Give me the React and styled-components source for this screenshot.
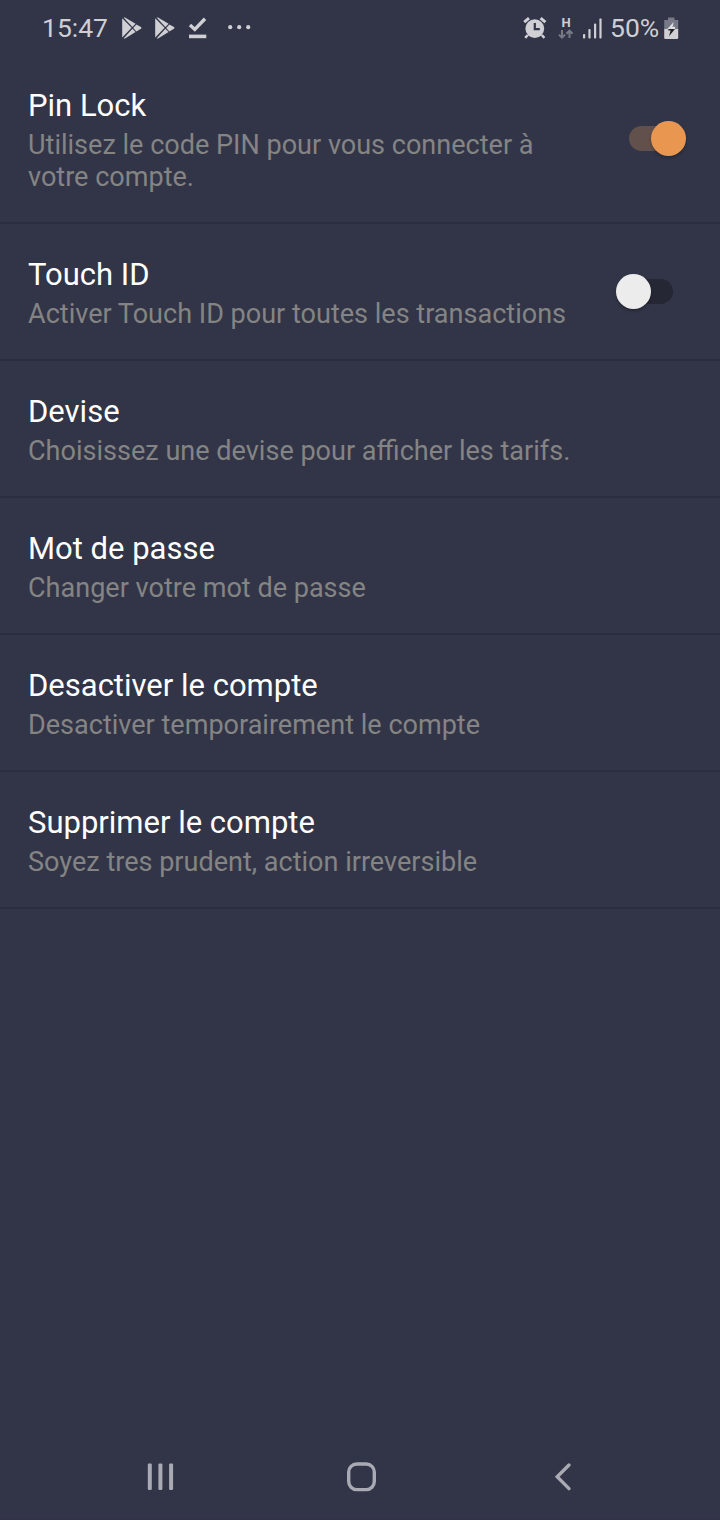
import React from 'react';
import styled, { createGlobalStyle } from 'styled-components';

const GlobalStyle = createGlobalStyle`
  * { box-sizing: border-box; }
  body { margin: 0; background: #323547; font-family: Roboto, "Liberation Sans", sans-serif; }
`;

const Screen = styled.div`
  width: 720px;
  height: 1520px;
  display: flex;
  flex-direction: column;
  background: #323547;
  overflow: hidden;
`;

const StatusBar = styled.header`
  height: 56px;
  flex: none;
  display: flex;
  justify-content: space-between;
  padding: 0 41px 0 42px;
  color: #cfcfd4;
`;

const StatusGroup = styled.div`
  display: flex;
  align-items: center;
`;

const StatusText = styled.span`
  width: ${(p) => p.$width}px;
  margin-left: ${(p) => p.$gap || 0}px;
  font-size: 26.5px;
  line-height: 32px;
  white-space: nowrap;
`;

const StatusIcon = styled.svg`
  display: block;
  flex: none;
  margin-left: ${(p) => p.$gap}px;
`;

const DataStatus = styled.div`
  width: 16px;
  margin-left: 11px;
  display: flex;
  flex-direction: column;
  align-items: center;
`;

const DataLabel = styled.span`
  font-size: 13px;
  line-height: 13px;
  font-weight: 700;
`;

const Settings = styled.main`
  flex: 1;
`;

const Row = styled.section`
  height: ${(p) => p.$height || 137}px;
  padding: 32px 28px 0;
  display: flex;
  justify-content: space-between;
  border-bottom: 2px solid #2b2d3f;

  &:first-child { padding-top: 31px; }
`;

const RowText = styled.div`
  width: 550px;
`;

const Title = styled.h2`
  margin: 0 0 5px;
  font-size: 31px;
  line-height: 37px;
  font-weight: 400;
  color: #fff;
`;

const Description = styled.p`
  margin: 0;
  font-size: 27.05px;
  line-height: 32px;
  color: #848484;
`;

const Track = styled.div`
  flex: none;
  width: 44px;
  height: 25px;
  margin: ${(p) => (p.$on ? '39px 19px 0 0' : '23px 19px 0 0')};
  border-radius: 13px;
  display: flex;
  align-items: center;
  background: ${(p) => (p.$on ? '#62504c' : '#252735')};
`;

const Thumb = styled.div`
  flex: none;
  width: 35px;
  height: 35px;
  margin-left: ${(p) => (p.$on ? 22 : -13)}px;
  border-radius: 50%;
  background: ${(p) => (p.$on ? '#e99651' : '#ececec')};
  box-shadow: 0 2px 3px rgba(0, 0, 0, 0.25);
`;

const NavBar = styled.nav`
  height: 84px;
  flex: none;
  display: flex;
  align-items: center;
  padding: 0 141px 1px 145px;
  border-bottom: 1px solid #362f47;
  justify-content: space-between;
`;

const NavIcon = styled.svg`
  display: block;
`;

const PlayIcon = ({ gap }) => (
  <StatusIcon $gap={gap} width="20" height="22" viewBox="0 0 20 22" fill="currentColor">
    <path d="M.2 1.2 9.6 10.8.2 20.6Z" />
    <path d="M1.6.4 3 .4 13.6 6.7 10.4 10Z" />
    <path d="M10.4 11.8 13.6 15 3 21.4 1.6 21.4Z" />
    <path d="M11.2 10.9 14.4 7.4 19 10q1 .9 0 1.8L14.4 14.4Z" />
  </StatusIcon>
);

const DownloadDoneIcon = () => (
  <StatusIcon $gap={13} width="19" height="22" viewBox="0 0 19 22">
    <path d="M2 8 6.8 12.4 17 1.8" fill="none" stroke="currentColor" strokeWidth="3.4" />
    <path d="M1 17.6h17.3v3.6H1z" fill="currentColor" />
  </StatusIcon>
);

const MoreIcon = () => (
  <StatusIcon $gap={21} width="23" height="6" viewBox="0 0 23 6" fill="currentColor">
    <circle cx="2.2" cy="2.2" r="2.1" />
    <circle cx="11.2" cy="2.2" r="2.1" />
    <circle cx="20.2" cy="2.2" r="2.1" />
  </StatusIcon>
);

const AlarmIcon = () => (
  <StatusIcon $gap={0} width="24" height="23" viewBox="0 0 24 23">
    <circle cx="11.8" cy="11.6" r="9.4" fill="currentColor" />
    <path d="M1.2 5.2 6 1.2M17.6 1.2 22.4 5.2" stroke="currentColor" strokeWidth="3" />
    <path d="M4.8 18 2.2 20.8M18.8 18 21.4 20.8" stroke="currentColor" strokeWidth="2.5" />
    <path d="M11.8 6v6.2h5" fill="none" stroke="#323547" strokeWidth="2.2" />
  </StatusIcon>
);

const DataIcon = () => (
  <DataStatus>
    <DataLabel>H</DataLabel>
    <svg width="16" height="11" viewBox="0 0 16 11" fill="none" stroke="#777987" strokeWidth="2">
      <path d="M4 1v7.5M.9 5.6 4 8.7 7.1 5.6M11.5 9V1.6M8.4 4.7 11.5 1.6 14.6 4.7" />
    </svg>
  </DataStatus>
);

const SignalIcon = () => (
  <StatusIcon $gap={9} width="19" height="21" viewBox="0 0 19 21" fill="currentColor">
    <rect x="0" y="16" width="2.2" height="4.5" rx=".8" />
    <rect x="5.4" y="11" width="2.2" height="9.5" rx=".8" />
    <rect x="11" y="5.5" width="2.2" height="15" rx=".8" />
    <rect x="16.4" y="0.5" width="2.2" height="20" rx=".8" />
  </StatusIcon>
);

const BatteryIcon = () => (
  <StatusIcon $gap={5} width="15" height="23" viewBox="0 0 15 23">
    <path d="M4 .5h6.5V3H4zM0.2 3h14v9H.2z" fill="#777987" />
    <path d="M.2 12h14v8.7q0 1.3-1.3 1.3H1.5Q.2 22 .2 20.7Z" fill="#cfcfd4" />
    <path d="M9.6 5 3.4 12H6.6L9 8.8Z" fill="#dedee3" />
    <path d="M7.3 9.8H11V12H6.5Z" fill="#dedee3" />
    <path d="M4.4 12H11L5 19.2 6.6 13.4H4.4Z" fill="#202126" />
  </StatusIcon>
);

const Switch = ({ on }) => (
  <Track $on={on} role="switch" aria-checked={on}>
    <Thumb $on={on} />
  </Track>
);

const items = [
  { title: 'Pin Lock', text: 'Utilisez le code PIN pour vous connecter à votre compte.', on: true, height: 168 },
  { title: 'Touch ID', text: 'Activer Touch ID pour toutes les transactions', on: false },
  { title: 'Devise', text: 'Choisissez une devise pour afficher les tarifs.' },
  { title: 'Mot de passe', text: 'Changer votre mot de passe' },
  { title: 'Desactiver le compte', text: 'Desactiver temporairement le compte' },
  { title: 'Supprimer le compte', text: 'Soyez tres prudent, action irreversible' },
];

export default function App() {
  return (
    <Screen>
      <GlobalStyle />
      <StatusBar>
        <StatusGroup>
          <StatusText $width={66}>15:47</StatusText>
          <PlayIcon gap={14} />
          <PlayIcon gap={13} />
          <DownloadDoneIcon />
          <MoreIcon />
        </StatusGroup>
        <StatusGroup>
          <AlarmIcon />
          <DataIcon />
          <SignalIcon />
          <StatusText $width={49} $gap={8}>50%</StatusText>
          <BatteryIcon />
        </StatusGroup>
      </StatusBar>
      <Settings>
        {items.map((item) => (
          <Row key={item.title} $height={item.height}>
            <RowText>
              <Title>{item.title}</Title>
              <Description>{item.text}</Description>
            </RowText>
            {item.on !== undefined && <Switch on={item.on} />}
          </Row>
        ))}
      </Settings>
      <NavBar>
        <NavIcon width="30" height="30" viewBox="0 0 30 30" fill="#a9aab3">
          <rect x="2.8" y="1.5" width="4" height="26.5" rx="1.2" />
          <rect x="13.4" y="1.5" width="4" height="26.5" rx="1.2" />
          <rect x="24.1" y="1.5" width="4" height="26.5" rx="1.2" />
        </NavIcon>
        <NavIcon width="30" height="30" viewBox="0 0 30 30" fill="none" stroke="#a9aab3" strokeWidth="3.4">
          <rect x="1.7" y="2" width="25.6" height="25.6" rx="8" />
        </NavIcon>
        <NavIcon width="30" height="30" viewBox="0 0 30 30" fill="none" stroke="#a9aab3" strokeWidth="3.4" strokeLinecap="round">
          <path d="M20 3 8.2 14.8 20 26.6" />
        </NavIcon>
      </NavBar>
    </Screen>
  );
}
